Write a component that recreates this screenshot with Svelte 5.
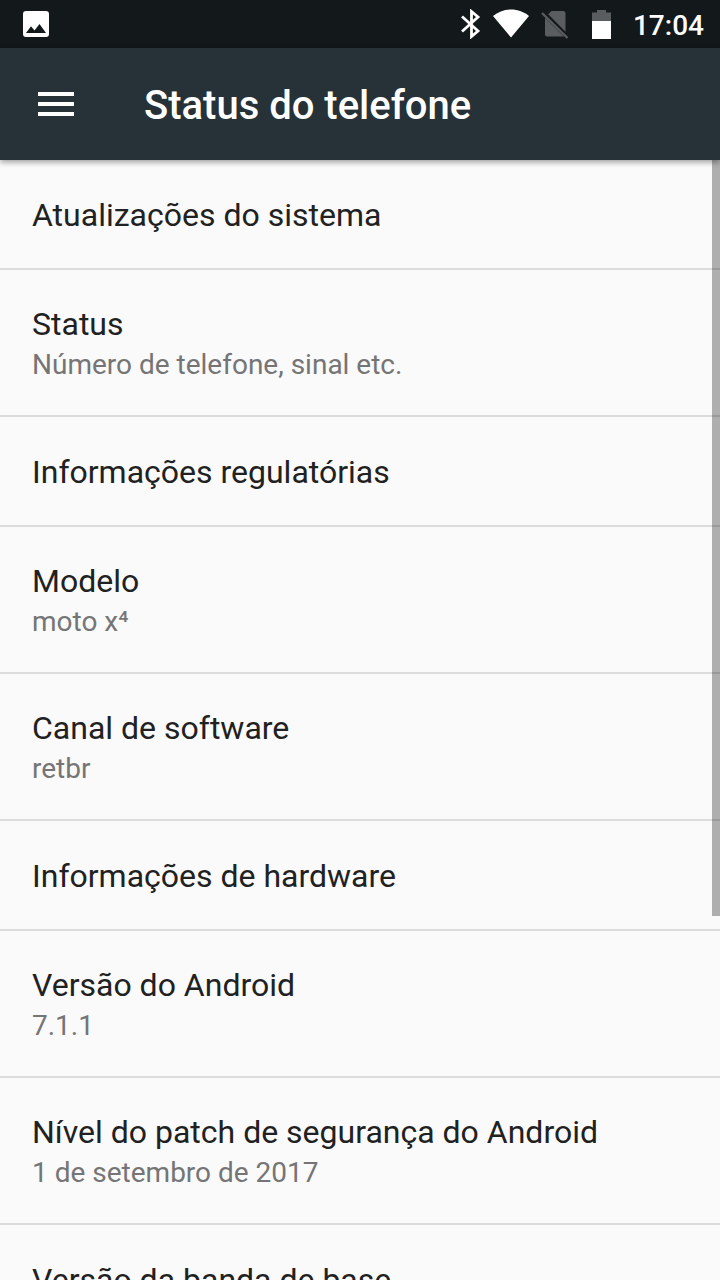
<script lang="ts">
	type Item = { title: string; summary?: string };

	const items: Item[] = [
		{ title: 'Atualizações do sistema' },
		{ title: 'Status', summary: 'Número de telefone, sinal etc.' },
		{ title: 'Informações regulatórias' },
		{ title: 'Modelo', summary: 'moto x⁴' },
		{ title: 'Canal de software', summary: 'retbr' },
		{ title: 'Informações de hardware' },
		{ title: 'Versão do Android', summary: '7.1.1' },
		{ title: 'Nível do patch de segurança do Android', summary: '1 de setembro de 2017' },
		{ title: 'Versão da banda de base' }
	];
</script>

<div class="screen">
	<div class="status-bar">
		<svg width="28" height="28" viewBox="0 0 28 28" aria-hidden="true">
			<path
				fill="#fff"
				fill-rule="evenodd"
				d="M4 1h20a3 3 0 0 1 3 3v20a3 3 0 0 1-3 3H4a3 3 0 0 1-3-3V4a3 3 0 0 1 3-3zM4 23h20l-6.500-9-5 6.500-3.500-4.200z"
			/>
		</svg>
		<div class="status-icons">
			<svg width="20" height="30" viewBox="0 0 20 30" aria-hidden="true">
				<path
					fill="none"
					stroke="#fff"
					stroke-width="2.800"
					d="M1 7.500l16 14.500-6.500 5.500V2.500L17 8L1 22.500"
				/>
			</svg>
			<svg width="36" height="30" viewBox="0 0 36 30" aria-hidden="true">
				<path fill="#fff" d="M18 28.500L0 7C5 3 11 .5 18 .5S31 3 36 7z" />
			</svg>
			<svg width="28" height="30" viewBox="0 0 28 30" aria-hidden="true">
				<path
					fill="#5a5d5f"
					d="M10.500 2H22a2.500 2.500 0 0 1 2.500 2.500v18.300L7.200 5.300zM4 8.700L23 27.500H6A2 2 0 0 1 4 25.500z"
				/>
				<path fill="none" stroke="#5a5d5f" stroke-width="2.400" d="M1 4l25.500 25" />
			</svg>
			<svg class="battery" width="20" height="30" viewBox="0 0 20 30" aria-hidden="true">
				<path fill="#5a5d5f" d="M0 12V3.500h5V1h9v2.500h5V12z" />
				<path fill="#fff" d="M0 12h19v18H0z" />
			</svg>
			<time>17:04</time>
		</div>
	</div>

	<header>
		<button type="button" class="menu" aria-label="Menu">
			<svg width="36" height="24" viewBox="0 0 36 24" aria-hidden="true">
				<path fill="#fff" d="M0 0h36v4H0zM0 10h36v4H0zM0 20h36v4H0z" />
			</svg>
		</button>
		<h1>Status do telefone</h1>
	</header>

	<main>
		<ul>
			{#each items as item}
				<li>
					<button type="button" class="item">
						<span class="title">{item.title}</span>
						{#if item.summary}
							<span class="summary">{item.summary}</span>
						{/if}
					</button>
				</li>
			{/each}
		</ul>
		<div class="scroll-thumb"></div>
	</main>
</div>

<style>
	.screen {
		display: flex;
		flex-direction: column;
		height: 100vh;
		background: #fafafa;
		color: #212121;
		font-family: Roboto, 'Noto Sans', sans-serif;
	}

	.status-bar {
		display: flex;
		align-items: center;
		justify-content: space-between;
		flex: none;
		height: 48px;
		padding: 0 16px 0 22px;
		background: #13181b;
		color: #fff;
	}

	.status-icons {
		display: flex;
		align-items: center;
		gap: 12px;
	}

	.status-bar svg {
		display: block;
	}

	.battery {
		margin: 0 9px 0 11px;
	}

	time {
		padding-top: 3px;
		font-size: 28px;
		font-weight: 500;
		line-height: 32px;
	}

	header {
		position: relative;
		z-index: 1;
		display: flex;
		align-items: center;
		gap: 54px;
		flex: none;
		height: 112px;
		padding: 0 22px;
		background: #263238;
		box-shadow: 0 2px 6px rgba(0, 0, 0, 0.4);
		color: #fff;
	}

	button {
		border: 0;
		background: none;
		color: inherit;
		font-family: inherit;
		cursor: pointer;
	}

	.menu {
		padding: 16px;
	}

	.menu svg {
		display: block;
	}

	h1 {
		margin: 0;
		padding-top: 4px;
		font-size: 40px;
		font-weight: 500;
		line-height: 48px;
	}

	main {
		position: relative;
		flex: 1;
		min-height: 0;
	}

	ul {
		height: 100%;
		margin: 0;
		padding: 0;
		overflow-y: auto;
		list-style: none;
		scrollbar-width: none;
	}

	li {
		border-bottom: 2px solid #dcdcdc;
	}

	.item {
		display: block;
		width: 100%;
		padding: 34px 32px 32px;
		text-align: left;
	}

	.item:has(.summary) {
		padding: 33px 32px 30px;
	}

	.title,
	.summary {
		display: block;
	}

	.title {
		font-size: 32px;
		line-height: 42px;
	}

	.summary {
		color: #757575;
		font-size: 28px;
		line-height: 40px;
	}

	/* Overlays the list without taking room from the rows. */
	.scroll-thumb {
		position: absolute;
		top: 0;
		right: 0;
		width: 8px;
		height: 67.5%;
		background: rgba(0, 0, 0, 0.3);
		pointer-events: none;
	}
</style>
